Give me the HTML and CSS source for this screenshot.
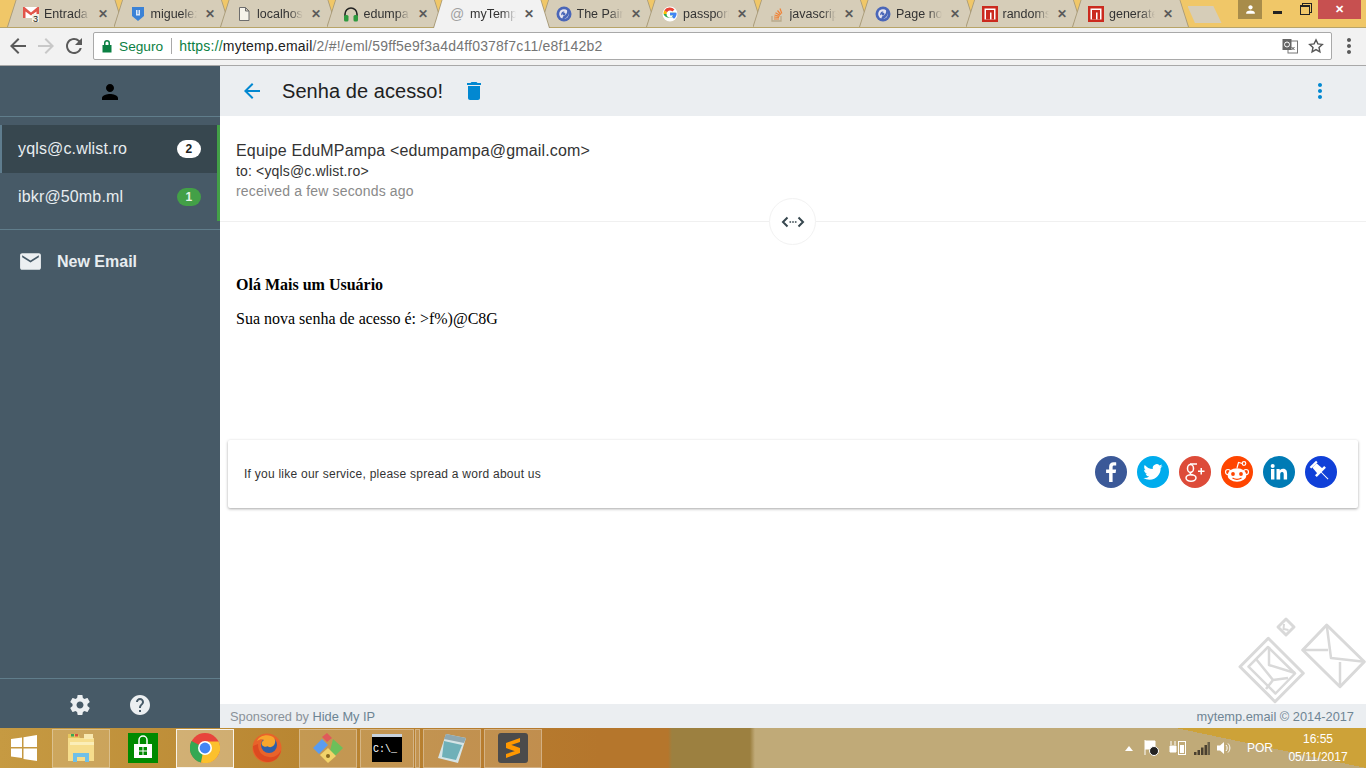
FILE: index.html
```html
<!DOCTYPE html>
<html>
  <head>
    <meta charset="utf-8">
    <title>myTemp.email</title>
    <link rel="stylesheet" href="styles.css">
  </head>
  <body>
    <svg class="sprites" xmlns="http://www.w3.org/2000/svg">
      <symbol id="i-person" viewBox="0 0 24 24"><path d="M12 12c2.21 0 4-1.79 4-4s-1.79-4-4-4-4 1.79-4 4 1.79 4 4 4zm0 2c-2.67 0-8 1.34-8 4v2h16v-2c0-2.66-5.33-4-8-4z"/></symbol>
      <symbol id="i-back" viewBox="0 0 24 24"><path d="M20 11H7.83l5.59-5.59L12 4l-8 8 8 8 1.41-1.41L7.83 13H20v-2z"/></symbol>
      <symbol id="i-trash" viewBox="0 0 24 24"><path d="M6 19c0 1.1.9 2 2 2h8c1.1 0 2-.9 2-2V7H6v12zM19 4h-3.5l-1-1h-5l-1 1H5v2h14V4z"/></symbol>
      <symbol id="i-dots" viewBox="0 0 24 24"><path d="M12 8c1.1 0 2-.9 2-2s-.9-2-2-2-2 .9-2 2 .9 2 2 2zm0 2c-1.1 0-2 .9-2 2s.9 2 2 2 2-.9 2-2-.9-2-2-2zm0 6c-1.1 0-2 .9-2 2s.9 2 2 2 2-.9 2-2-.9-2-2-2z"/></symbol>
      <symbol id="i-mail" viewBox="0 0 24 24"><path d="M20 4H4c-1.1 0-1.99.9-1.99 2L2 18c0 1.1.9 2 2 2h16c1.1 0 2-.9 2-2V6c0-1.1-.9-2-2-2zm0 4l-8 5-8-5V6l8 5 8-5v2z"/></symbol>
      <symbol id="i-gear" viewBox="0 0 24 24"><path d="M19.43 12.98c.04-.32.07-.64.07-.98s-.03-.66-.07-.98l2.11-1.65c.19-.15.24-.42.12-.64l-2-3.46c-.12-.22-.39-.3-.61-.22l-2.49 1c-.52-.4-1.08-.73-1.69-.98l-.38-2.65C14.46 2.18 14.25 2 14 2h-4c-.25 0-.46.18-.49.42l-.38 2.65c-.61.25-1.17.59-1.69.98l-2.49-1c-.23-.09-.49 0-.61.22l-2 3.46c-.13.22-.07.49.12.64l2.11 1.65c-.04.32-.07.65-.07.98s.03.66.07.98l-2.11 1.65c-.19.15-.24.42-.12.64l2 3.46c.12.22.39.3.61.22l2.49-1c.52.4 1.08.73 1.69.98l.38 2.65c.03.24.24.42.49.42h4c.25 0 .46-.18.49-.42l.38-2.65c.61-.25 1.17-.59 1.69-.98l2.49 1c.23.09.49 0 .61-.22l2-3.46c.12-.22.07-.49-.12-.64l-2.11-1.65zM12 15.5c-1.93 0-3.5-1.57-3.5-3.5s1.57-3.5 3.5-3.5 3.5 1.57 3.5 3.5-1.57 3.5-3.5 3.5z"/></symbol>
      <symbol id="i-help" viewBox="0 0 24 24"><path d="M12 2C6.48 2 2 6.48 2 12s4.48 10 10 10 10-4.48 10-10S17.52 2 12 2zm1 17h-2v-2h2v2zm2.07-7.75l-.9.92C13.45 12.9 13 13.5 13 15h-2v-.5c0-1.1.45-2.1 1.17-2.83l1.24-1.26c.37-.36.59-.86.59-1.41 0-1.1-.9-2-2-2s-2 .9-2 2H8c0-2.21 1.79-4 4-4s4 1.79 4 4c0 .88-.36 1.68-.93 2.25z"/></symbol>
      <symbol id="f-disc" viewBox="0 0 16 16"><circle cx="8" cy="8" r="7.500" fill="#4a66b8"/><circle cx="8" cy="8" r="4.800" fill="#e8e6f0"/><path d="M10.500 2.500C12 5 11 9 7 10.500L6 13.500C10 13 13 10 13 6.500 13 5 12 3.500 10.500 2.500zM7 5.500A2.800 2.800 0 0 0 5.500 9.500L8.500 5.500z" fill="#4a66b8"/><circle cx="8" cy="8" r="1.500" fill="#4a66b8"/></symbol>
      <symbol id="f-npm" viewBox="0 0 16 16"><rect width="16" height="16" fill="#cb2a1e"/><rect x="2.500" y="2.500" width="11" height="11" fill="#fff"/><path d="M4 13.500V4h8v9.500H9.500V6.500H8v7z" fill="#cb2a1e"/></symbol>
    </svg>

    <div class="chrome">
      <div class="tabstrip">
        <div class="tab">
          <svg class="favicon fav-gmail" viewBox="0 0 16 16"><path d="M0 1h16v11H0z" fill="#fff"/><path d="M0 1v11h2.500V5.500L8 9.500l5.500-4V12H16V1h-1.500L8 6.500 1.500 1z" fill="#e2554a"/><rect x="9" y="8" width="7" height="8" fill="#f4efe2"/><text x="10" y="15.500" class="fav-num">3</text></svg>
          <span class="tab-title">Entrada (</span><span class="tab-x">✕</span>
        </div>
        <div class="tab">
          <svg class="favicon" viewBox="0 0 16 16"><path d="M2 1h12v9l-6 5-6-5z" fill="#3b82d6"/><path d="M6 4h1.500v4h1V4H10v5.500H6z" fill="#dbe8fa"/></svg>
          <span class="tab-title">miguelez</span><span class="tab-x">✕</span>
        </div>
        <div class="tab">
          <svg class="favicon" viewBox="0 0 16 16"><path d="M3.500 1.500h6l3.500 3.500v9.500h-9.500z M9.500 1.500v3.500h3.500" fill="#f6f3ea" stroke="#6d6d6d"/></svg>
          <span class="tab-title">localhost</span><span class="tab-x">✕</span>
        </div>
        <div class="tab">
          <svg class="favicon" viewBox="0 0 16 16"><path d="M2 10V8a6 6 0 0 1 12 0v2" fill="none" stroke="#222" stroke-width="1.600"/><rect x="1" y="9" width="4.500" height="6.500" rx="1.500" fill="#2f9a3f"/><rect x="10.500" y="9" width="4.500" height="6.500" rx="1.500" fill="#2f9a3f"/></svg>
          <span class="tab-title">edumpa</span><span class="tab-x">✕</span>
        </div>
        <div class="tab is-active">
          <span class="favicon fav-at">@</span>
          <span class="tab-title">myTemp</span><span class="tab-x">✕</span>
        </div>
        <div class="tab">
          <svg class="favicon"><use href="#f-disc"/></svg>
          <span class="tab-title">The Pain</span><span class="tab-x">✕</span>
        </div>
        <div class="tab">
          <svg class="favicon" viewBox="0 0 16 16"><circle cx="8" cy="8" r="7.500" fill="#fff"/><path d="M13.700 6.800H8v2.500h3.200A3.400 3.400 0 0 1 4.600 8H1.500a6.500 6.500 0 0 0 12.200-1.200z" fill="#34a853"/><path d="M4.600 8a3.400 3.400 0 0 1 .5-1.800L2.400 4.300A6.500 6.500 0 0 0 1.500 8z" fill="#fbbc05"/><path d="M2.400 4.300L5.100 6.200A3.400 3.400 0 0 1 10.400 5.600l2.100-2.100A6.500 6.500 0 0 0 2.400 4.300z" fill="#ea4335"/><path d="M14.500 6.800H8v2.500h3.300a3.400 3.400 0 0 1-1.300 1.800l2 1.700a6.500 6.500 0 0 0 2.500-6z" fill="#4285f4"/></svg>
          <span class="tab-title">passport</span><span class="tab-x">✕</span>
        </div>
        <div class="tab">
          <svg class="favicon" viewBox="0 0 16 16"><path d="M3 10v5h9v-5" fill="none" stroke="#b8a98c" stroke-width="1.300"/><path d="M5 13h5M5 11l5 .5M5.500 9l5 1.300M6.500 6.800l4.500 2.500M8.500 4.500l3.300 4M11 2.500l1.800 5" fill="none" stroke="#ef8236" stroke-width="1.200"/></svg>
          <span class="tab-title">javascript</span><span class="tab-x">✕</span>
        </div>
        <div class="tab">
          <svg class="favicon"><use href="#f-disc"/></svg>
          <span class="tab-title">Page not</span><span class="tab-x">✕</span>
        </div>
        <div class="tab">
          <svg class="favicon"><use href="#f-npm"/></svg>
          <span class="tab-title">randoms</span><span class="tab-x">✕</span>
        </div>
        <div class="tab">
          <svg class="favicon"><use href="#f-npm"/></svg>
          <span class="tab-title">generate</span><span class="tab-x">✕</span>
        </div>
        <div class="new-tab"></div>
        <div class="win-controls">
          <div class="win-user"><svg class="ico-13"><use href="#i-person"/></svg></div>
          <div class="win-btn"><span class="win-min"></span></div>
          <div class="win-btn"><span class="win-max"></span></div>
          <div class="win-close">✕</div>
        </div>
      </div>
      <div class="toolbar">
        <svg class="nav-ico" viewBox="0 0 24 24"><use href="#i-back"/></svg>
        <svg class="nav-ico is-off" viewBox="0 0 24 24"><path d="M4 11h12.170l-5.590-5.590L12 4l8 8-8 8-1.410-1.410L16.170 13H4v-2z"/></svg>
        <svg class="nav-ico" viewBox="0 0 24 24"><path d="M17.650 6.350A7.958 7.958 0 0 0 12 4c-4.420 0-7.990 3.580-7.990 8s3.570 8 7.990 8c3.730 0 6.840-2.550 7.730-6h-2.080A5.990 5.990 0 0 1 12 18c-3.310 0-6-2.690-6-6s2.690-6 6-6c1.660 0 3.140.69 4.220 1.780L13 11h7V4l-2.350 2.350z"/></svg>
        <div class="omnibox">
          <svg class="lock" viewBox="0 0 12 14"><path d="M3 6V4a3 3 0 0 1 6 0v2h1.500v7.500h-9V6zm1.500 0h3V4a1.500 1.500 0 0 0-3 0z"/></svg>
          <span class="secure">Seguro</span>
          <span class="omni-sep"></span>
          <span class="url"><span class="url-https">https://</span><span class="url-host">mytemp.email</span>/2/#!/eml/59ff5e9f3a4d4ff0378f7c11/e8f142b2</span>
          <svg class="translate" viewBox="0 0 16 16"><rect x="6" y="3" width="9.500" height="12" fill="#fff" stroke="#777"/><rect x="0.500" y="1" width="9" height="11" fill="#666"/><circle cx="5" cy="6.500" r="2.500" fill="none" stroke="#fff"/><path d="M9.500 9l3 3M12.500 9l-3 3" stroke="#555"/></svg>
          <svg class="star" viewBox="0 0 16 16"><path d="M8 1.800l1.900 4.100 4.400.5-3.300 3 .9 4.400L8 11.600l-3.900 2.200.9-4.400-3.300-3 4.400-.5z" fill="none" stroke="#555" stroke-width="1.400"/></svg>
        </div>
        <svg class="menu-ico" viewBox="0 0 24 24"><use href="#i-dots"/></svg>
      </div>
    </div>

    <div class="app">
      <aside class="sidebar">
        <div class="side-top"><svg class="ico-24"><use href="#i-person"/></svg></div>
        <div class="side-accounts">
          <ul class="accounts">
            <li class="account is-current"><span>yqls@c.wlist.ro</span><b class="badge">2</b></li>
            <li class="account"><span>ibkr@50mb.ml</span><b class="badge is-green">1</b></li>
          </ul>
        </div>
        <div class="new-email"><svg class="ico-mail"><use href="#i-mail"/></svg><span>New Email</span></div>
        <div class="side-bottom">
          <svg class="ico-24"><use href="#i-gear"/></svg>
          <svg class="ico-24"><use href="#i-help"/></svg>
        </div>
      </aside>

      <main class="content">
        <header class="mail-bar">
          <svg class="ico-24 blue"><use href="#i-back"/></svg>
          <h1>Senha de acesso!</h1>
          <svg class="ico-24 blue"><use href="#i-trash"/></svg>
          <svg class="ico-24 blue bar-more"><use href="#i-dots"/></svg>
        </header>

        <div class="mail-scroll">
          <div class="mail-head">
            <div class="from">Equipe EduMPampa &lt;edumpampa@gmail.com&gt;</div>
            <div class="to">to: &lt;yqls@c.wlist.ro&gt;</div>
            <div class="when">received a few seconds ago</div>
            <div class="source-btn">
              <svg viewBox="0 0 24 16" width="24" height="16"><path d="M6.500 3.500L2 8l4.500 4.500M17.500 3.500L22 8l-4.500 4.500" fill="none" stroke="#37474f" stroke-width="2"/><path d="M8.500 7.200h1.600v1.600H8.500zM11.200 7.200h1.600v1.600h-1.600zM13.900 7.200h1.600v1.600h-1.600z" fill="#37474f"/></svg>
            </div>
          </div>
          <div class="mail-body">
            <p><strong>Olá Mais um Usuário</strong></p>
            <p>Sua nova senha de acesso é: &gt;f%)@C8G</p>
          </div>
          <div class="share-card">
            <span>If you like our service, please spread a word about us</span>
            <div class="share-icons">
              <svg class="soc" viewBox="0 0 32 32"><circle cx="16" cy="16" r="16" fill="#3b5998"/><path d="M17.600 26V17h3l.5-3.500h-3.500v-2.200c0-1 .3-1.700 1.800-1.700h1.800V6.400c-.3 0-1.400-.1-2.600-.1-2.700 0-4.500 1.600-4.500 4.600v2.600h-3V17h3v9z" fill="#fff"/></svg>
              <svg class="soc" viewBox="0 0 32 32"><circle cx="16" cy="16" r="16" fill="#00aced"/><g transform="translate(6.400 6.400) scale(.8)"><path fill="#fff" d="M23.953 4.570a10 10 0 01-2.825.775 4.958 4.958 0 002.163-2.723c-.951.555-2.005.959-3.127 1.184a4.920 4.920 0 00-8.384 4.482C7.690 8.095 4.067 6.130 1.640 3.162a4.822 4.822 0 00-.666 2.475c0 1.710.870 3.213 2.188 4.096a4.904 4.904 0 01-2.228-.616v.060a4.923 4.923 0 003.946 4.827 4.996 4.996 0 01-2.212.085 4.936 4.936 0 004.604 3.417 9.867 9.867 0 01-6.102 2.105c-.390 0-.779-.023-1.170-.067a13.995 13.995 0 007.557 2.209c9.053 0 13.998-7.496 13.998-13.985 0-.210 0-.420-.015-.630A9.935 9.935 0 0024 4.590z"/></g></svg>
              <svg class="soc" viewBox="0 0 32 32"><circle cx="16" cy="16" r="16" fill="#dd4b39"/><g fill="none" stroke="#fff" stroke-width="1.500"><ellipse cx="11.500" cy="12.500" rx="3" ry="4"/><ellipse cx="12" cy="22" rx="5" ry="3.200"/><path d="M13 16c-2.500.5-2.500 2 .5 3"/><path d="M11 8h7"/></g><path d="M21.500 12h1.500v2.500h2.500V16H23v2.500h-1.500V16H19v-1.500h2.500z" fill="#fff"/></svg>
              <svg class="soc" viewBox="0 0 32 32"><circle cx="16" cy="16" r="16" fill="#ff4500"/><circle cx="7" cy="16" r="2.500" fill="#ff4500" stroke="#fff" stroke-width="1.200"/><circle cx="25" cy="16" r="2.500" fill="#ff4500" stroke="#fff" stroke-width="1.200"/><ellipse cx="16" cy="19" rx="9.500" ry="6.800" fill="#fff"/><circle cx="23" cy="7.500" r="1.800" fill="#ff4500" stroke="#fff" stroke-width="1.200"/><path d="M16 12l1.500-5.500 4 1" fill="none" stroke="#fff" stroke-width="1.200"/><circle cx="12" cy="18" r="1.900" fill="#ff4500"/><circle cx="20" cy="18" r="1.900" fill="#ff4500"/><path d="M11.500 22c2.500 1.500 6.500 1.500 9 0" fill="none" stroke="#ff4500" stroke-width="1.200"/></svg>
              <svg class="soc" viewBox="0 0 32 32"><circle cx="16" cy="16" r="16" fill="#007bb5"/><path d="M8 13h3.400v10.500H8zM9.700 8a2 2 0 1 1 0 4 2 2 0 0 1 0-4zM13.500 13h3.200v1.500c.5-.9 1.600-1.800 3.300-1.800 3.500 0 4.100 2.300 4.100 5.300v5.500h-3.400v-4.900c0-1.200 0-2.700-1.600-2.700s-1.900 1.300-1.900 2.600v5h-3.700z" fill="#fff"/></svg>
              <svg class="soc" viewBox="0 0 32 32"><circle cx="16" cy="16" r="16" fill="#1040d8"/><g transform="rotate(-45 16 16) translate(0 -1)" fill="#fff"><path d="M11.500 5.500h9v2.200h-9z"/><path d="M13 7.700h6l.6 7.800H12.400z"/><path d="M9.500 15h13v2.500h-13z"/><path d="M15.500 17h1v10h-1z"/></g></svg>
            </div>
          </div>
        </div>

        <footer class="mail-foot">
          <span>Sponsored by <a class="foot-link">Hide My IP</a></span>
          <span class="foot-copy">mytemp.email © 2014-2017</span>
        </footer>

        <svg class="watermark" viewBox="0 0 130 89" width="130" height="89">
          <g fill="none" stroke="#d9d9d9" stroke-width="2.500" stroke-linejoin="round">
            <path d="M50 4l8 8-8 8-8-8z" stroke-width="3"/>
            <path d="M48 9l-.5 5 5 1" stroke-width="2"/>
            <path d="M32.300 23.300L4 51.700 39 86.700 67.300 58.300z" stroke-width="3"/>
            <path d="M32 32L12.500 51.700 39.500 78.500 59 58.500z"/>
            <path d="M33 32v18l26 8M20 44l17 21 15-2M30 74l7-9"/>
            <path d="M90.700 10L66.700 35 104 71.700 128.300 46.700z" stroke-width="3"/>
            <path d="M90.700 10L95 43 128.300 46.700M66.700 35H92M104 71.700V47"/>
          </g>
        </svg>
      </main>
    </div>

    <div class="taskbar">
      <svg class="start" viewBox="0 0 26 26"><path d="M0 4l11-1.500V12H0zM12.500 2.300L26 0v12H12.500zM0 13.500h11V23L0 21.500zM12.500 13.500H26V26l-13.500-2z" fill="#fff"/></svg>
      <div class="task is-open gap-8">
        <svg viewBox="0 0 30 30" width="30" height="30"><path d="M2 5h26v23H2z" fill="#f6dd8c"/><path d="M2 1h10l2 4H2z" fill="#e8c860"/><path d="M5 1h3v2.500H5z" fill="#3aa655"/><path d="M9 1h3v2.500H9z" fill="#d8503c"/><path d="M18 1h9v5h-9z" fill="#f8e8b0"/><path d="M4 9h24v3H4z" fill="#fbeeb8"/><path d="M7 29v-9h16v9h-4v-5h-8v5z" fill="#6fc0e8"/></svg>
      </div>
      <div class="task is-narrow gap-8">
        <svg viewBox="0 0 30 30" width="30" height="30"><path d="M0 0h30v30H0z" fill="#008a00"/><path d="M6 11h18v14H6z" fill="#fff"/><path d="M11 11V7a4 4 0 0 1 8 0v4" fill="none" stroke="#fff" stroke-width="1.500"/><path d="M11 14h3.500v3.500H11zM15.500 14H19v3.500h-3.500zM11 18.500h3.500V22H11zM15.500 18.500H19V22h-3.500z" fill="#008a00"/></svg>
      </div>
      <div class="task is-open is-current gap-8">
        <svg viewBox="0 0 30 30" width="30" height="30"><circle cx="15" cy="15" r="15" fill="#e8453c"/><path d="M15 15L1.500 8A15 15 0 0 0 11 29.500z" fill="#34a853"/><path d="M15 8.500h13.500A15 15 0 0 1 11 29.500z" fill="#fbc02d"/><circle cx="15" cy="15" r="7" fill="#fff"/><circle cx="15" cy="15" r="5.400" fill="#4285f4"/></svg>
      </div>
      <div class="task is-narrow gap-7">
        <svg viewBox="0 0 30 30" width="30" height="30"><circle cx="15" cy="15" r="14.500" fill="#e8632a"/><circle cx="17" cy="12" r="8" fill="#2f5fa8"/><path d="M19 3c-5-2-12 0-14 5 3-2 5-2 7-1-2 1-3 3-2 5 2 3 7 2 8-1l-3 1c2 4 7 2 8-2 1-3-1-6-4-7z" fill="#f8a52c"/><path d="M1 13c0 9 7 16 15 16 7 0 12-5 13-12-2 5-7 8-12 7C10 23 6 19 6 11z" fill="#dd4a20"/></svg>
      </div>
      <div class="task is-open gap-3">
        <svg viewBox="0 0 32 32" width="32" height="32"><path d="M10 5l5-4 5 5-5 4z" fill="#e05a5a"/><path d="M1 16l9-9 6 6-9 9z" fill="#5a9cf0"/><path d="M21 7l10 9-8 8-5-5z" fill="#6cc05a"/><path d="M8 23l8-7 8 8-8 7z" fill="#f2d36a"/><circle cx="16" cy="24" r="2" fill="#8a6a20"/></svg>
      </div>
      <div class="task is-open is-cmd gap-1">
        <svg viewBox="0 0 30 28" width="30" height="28"><path d="M0 0h30v28H0z" fill="#000"/><path d="M0 0h30v3H0z" fill="#c8d2dc"/></svg>
        <span class="cmd-text">C:\_</span>
      </div>
      <div class="task-sliver"></div>
      <div class="task is-open gap-3">
        <svg viewBox="0 0 30 32" width="30" height="32"><path d="M9 2l20 4-8 25L1 26z" fill="#d5e4e6"/><path d="M9 2l20 4-2 5L7 7z" fill="#8fa8b0"/><path d="M7 9l18 4-6 15-14-3z" fill="#6fb0b8"/></svg>
      </div>
      <div class="task is-open">
        <svg viewBox="0 0 30 30" width="30" height="30"><rect width="30" height="30" rx="3" fill="#4b4b4b"/><path d="M22 5L8 10v5l14 5v-5l-9-3 9-3zM8 25l14-5v-5L8 10v5l9 3-9 3z" fill="#ff9800"/></svg>
      </div>
      <div class="tray">
        <span class="tray-caret"></span>
        <svg class="tray-flag" viewBox="0 0 16 18" width="16" height="18"><path d="M2 1v15M2 2h10v8H2" fill="#fff" stroke="#fff"/><circle cx="11" cy="12" r="4.500" fill="#222" stroke="#fff"/></svg>
        <svg class="tray-batt" viewBox="0 0 18 18" width="18" height="18"><path d="M1 7h6v6H1zM2 2v4M6 2v4" fill="#fff" stroke="#fff"/><rect x="9.500" y="2.500" width="7" height="13" fill="none" stroke="#fff"/><rect x="11" y="6" width="4" height="8" fill="#fff"/></svg>
        <svg viewBox="0 0 16 14" width="16" height="14"><path d="M0 11h2.500v3H0zM3.500 9H6v5H3.500zM7 6.500h2.500V14H7zM10.500 4H13v10h-2.500z" fill="#4a4030"/><path d="M13.500 1H16v13h-2.500z" fill="#6a6048"/></svg>
        <svg viewBox="0 0 16 16" width="16" height="16"><path d="M1 5.500h3L8 2v12L4 10.500H1z" fill="#fff"/><path d="M10 5c1.500 1.500 1.500 4.500 0 6M12 3.500c2.500 2.500 2.500 6.500 0 9" fill="none" stroke="#fff"/></svg>
        <span class="tray-lang">POR</span>
        <div class="tray-clock"><div>16:55</div><div>05/11/2017</div></div>
      </div>
    </div>
  </body>
</html>
```

FILE: styles.css
```css
* {
  box-sizing: border-box;
}

html, body {
  height: 100%;
}

body {
  margin: 0;
  display: flex;
  flex-direction: column;
  height: 768px;
  overflow: hidden;
  font-family: "Liberation Sans", Arial, sans-serif;
  color: #212121;
  background: #fff;
}

.sprites {
  display: none;
}

/* browser frame */
.chrome {
  flex: none;
  height: 66px;
  background: #f2f2f2;
}

.tabstrip {
  display: flex;
  align-items: flex-end;
  height: 28px;
  padding: 0 5px 0 7px;
  background: #f0c768;
  border-bottom: 1px solid #b8a468;
}

.tab {
  position: relative;
  flex: none;
  display: flex;
  align-items: center;
  width: 117px;
  height: 28px;
  margin-right: -10.5px;
  padding: 1px 0 0 16px;
  background: #a89a78;
  clip-path: polygon(0 100%, 9px 0, calc(100% - 9px) 0, 100% 100%);
  font-size: 12.5px;
  color: #333;
}

.tab::before {
  content: "";
  position: absolute;
  left: 0;
  right: 0;
  top: 1px;
  bottom: 0;
  background: #d6cdb8;
  clip-path: polygon(1px 100%, 9.5px 0, calc(100% - 9.5px) 0, calc(100% - 1px) 100%);
}

.tab.is-active {
  z-index: 2;
  height: 29px;
  margin-bottom: -1px;
}

.tab.is-active::before {
  background: #f2f2f2;
}

.favicon {
  position: relative;
  flex: none;
  width: 16px;
  height: 16px;
}

.fav-num {
  font-family: "Liberation Sans", sans-serif;
  font-size: 9px;
  fill: #222;
}

.fav-at {
  color: #a0a0a0;
  font-size: 14px;
  line-height: 16px;
  text-align: center;
}

.tab-title {
  position: relative;
  flex: none;
  width: 46px;
  margin-left: 5px;
  overflow: hidden;
  white-space: nowrap;
  -webkit-mask-image: linear-gradient(to right, #000 70%, transparent);
  mask-image: linear-gradient(to right, #000 70%, transparent);
}

.tab-x {
  position: relative;
  margin-left: 8px;
  font-size: 12px;
  font-weight: bold;
  color: #5a5a5a;
}

.new-tab {
  flex: none;
  width: 34px;
  height: 17px;
  margin: 0 0 4px 9px;
  background: #d6cdb8;
  clip-path: polygon(0 0, 76% 0, 100% 100%, 22% 100%);
}

.win-controls {
  display: flex;
  align-self: flex-start;
  margin-left: auto;
}

.win-user {
  display: flex;
  align-items: center;
  justify-content: center;
  width: 24px;
  height: 19px;
  margin-right: 2px;
  background: #a88c4a;
}

.ico-13 {
  width: 13px;
  height: 13px;
  fill: #fff;
}

.win-btn {
  display: flex;
  align-items: center;
  justify-content: center;
  width: 27px;
  height: 19px;
}

.win-min {
  width: 9px;
  height: 3px;
  margin-top: 5px;
  background: #222;
}

.win-max {
  width: 10px;
  height: 10px;
  border: 1px solid #222;
  border-top-width: 2px;
  box-shadow: 2px -2px 0 -1px #f0c768, 2px -2px 0 0 #222;
}

.win-close {
  width: 43px;
  height: 19px;
  background: #c75050;
  color: #fff;
  font-size: 11px;
  font-weight: bold;
  line-height: 19px;
  text-align: center;
}

.toolbar {
  display: flex;
  align-items: center;
  height: 38px;
  padding: 0 0 1px 6px;
  border-bottom: 1px solid #a8a8a8;
}

.nav-ico {
  flex: none;
  width: 24px;
  height: 24px;
  margin-right: 4px;
  fill: #5a5a5a;
}

.nav-ico.is-off {
  fill: #c8c8c8;
}

.omnibox {
  flex: 1;
  display: flex;
  align-items: center;
  height: 28px;
  margin-left: 3px;
  padding: 0 7px 0 7px;
  background: #fff;
  border: 1px solid #a9a9a9;
  border-radius: 2px;
  font-size: 14px;
}

.lock {
  flex: none;
  width: 12px;
  height: 14px;
  fill: #0b8043;
}

.secure {
  margin-left: 6px;
  font-size: 13.7px;
  color: #0b8043;
}

.omni-sep {
  width: 1px;
  height: 16px;
  margin: 0 7px 0 8px;
  background: #a9a9a9;
}

.url {
  flex: 1;
  letter-spacing: .21px;
  color: #757575;
  white-space: nowrap;
}

.url-https {
  color: #0b8043;
}

.url-host {
  color: #212121;
}

.translate {
  flex: none;
  width: 16px;
  height: 16px;
  margin-right: 10px;
}

.star {
  flex: none;
  width: 16px;
  height: 16px;
}

.menu-ico {
  flex: none;
  width: 24px;
  height: 24px;
  margin: 0 5px;
  fill: #5a5a5a;
}

/* mail app */
.app {
  flex: 1;
  display: flex;
  min-height: 0;
}

.sidebar {
  flex: none;
  display: flex;
  flex-direction: column;
  width: 220px;
  background: #475a67;
  color: #e8edf0;
}

.side-top {
  display: flex;
  align-items: center;
  justify-content: center;
  height: 51px;
  padding-top: 2px;
  border-bottom: 1px solid #607d8b;
}

.ico-24 {
  flex: none;
  width: 24px;
  height: 24px;
}

.side-accounts {
  padding: 8px 0;
  border-bottom: 1px solid #607d8b;
}

.accounts {
  margin: 0;
  padding: 0;
  list-style: none;
  border-right: 3px solid #43a047;
}

.account {
  display: flex;
  align-items: center;
  justify-content: space-between;
  height: 48px;
  padding: 0 16px 0 18px;
  font-size: 16px;
  letter-spacing: .15px;
}

.account.is-current {
  padding-left: 16px;
  background: #37474f;
  border-left: 2px solid #5f7d8e;
}

.badge {
  width: 24px;
  height: 18px;
  border-radius: 9px;
  background: #fff;
  color: #222;
  font-size: 12px;
  line-height: 18px;
  text-align: center;
}

.badge.is-green {
  background: #43a047;
  color: #e8f5e9;
}

.new-email {
  display: flex;
  align-items: center;
  height: 62px;
  padding: 1px 0 0 18px;
  font-size: 16px;
  font-weight: bold;
}

.ico-mail {
  flex: none;
  width: 25px;
  height: 25px;
  margin-right: 14px;
  fill: #eceff1;
}

.side-bottom {
  display: flex;
  align-items: center;
  justify-content: center;
  gap: 36px;
  height: 50px;
  margin-top: auto;
  padding-top: 3px;
  border-top: 1px solid #607d8b;
  fill: #eceff1;
}

.content {
  position: relative;
  flex: 1;
  display: flex;
  flex-direction: column;
  min-width: 0;
}

.mail-bar {
  flex: none;
  display: flex;
  align-items: center;
  height: 50px;
  padding: 0 34px 0 20px;
  background: #ebeef1;
}

.mail-bar h1 {
  margin: 0 19px 0 18px;
  font-size: 20px;
  font-weight: normal;
  letter-spacing: .06px;
  color: #212121;
}

.blue {
  fill: #0288d1;
}

.bar-more {
  margin-left: auto;
}

.mail-scroll {
  flex: 1;
  min-height: 0;
}

.mail-head {
  position: relative;
  height: 106px;
  padding: 25px 16px 0;
  border-bottom: 1px solid #f0f0f0;
  letter-spacing: .16px;
}

.from {
  font-size: 16px;
  line-height: 20px;
  color: #333;
}

.to {
  font-size: 14px;
  line-height: 20px;
  color: #333;
}

.when {
  font-size: 14px;
  line-height: 20px;
  color: #8a8a8a;
}

.source-btn {
  position: absolute;
  left: 50%;
  bottom: -24px;
  display: flex;
  align-items: center;
  justify-content: center;
  width: 47px;
  height: 47px;
  margin-left: -24px;
  background: #fff;
  border: 1px solid #f2f2f2;
  border-radius: 50%;
}

.mail-body {
  padding: 54px 16px 0;
  font-family: "Liberation Serif", "Times New Roman", serif;
  font-size: 16px;
  color: #000;
}

.mail-body p {
  margin: 0 0 16px;
}

.share-card {
  display: flex;
  align-items: center;
  justify-content: space-between;
  height: 68px;
  margin: 112px 8px 0;
  padding: 0 21px 0 16px;
  background: #fff;
  border-radius: 2px;
  box-shadow: 0 1px 3px rgba(0, 0, 0, .35);
  font-size: 12px;
  letter-spacing: .25px;
  color: #333;
}

.share-icons {
  display: flex;
  gap: 10px;
  margin-top: -4px;
}

.soc {
  width: 32px;
  height: 32px;
}

.mail-foot {
  flex: none;
  display: flex;
  align-items: center;
  justify-content: space-between;
  height: 24px;
  padding: 0 12px 0 10px;
  background: #ebeef1;
  font-size: 12.8px;
  color: #8a9299;
}

.foot-link {
  color: #6b8493;
}

.foot-copy {
  color: #6f8594;
}

.watermark {
  position: absolute;
  right: 0;
  bottom: 24px;
}

/* taskbar */
.taskbar {
  flex: none;
  display: flex;
  align-items: center;
  height: 40px;
  padding-left: 11px;
  background:
    linear-gradient(to top right, transparent 50%, #cda238 50%) right top / 190px 40px no-repeat,
    linear-gradient(to right, #c69a42 0, #b98632 300px, #b5762c 600px, #b5762c 668px, #9c8040 672px, #9c8040 750px, #c0aa78 755px, #c0aa78 100%);
  color: #fff;
}

.start {
  flex: none;
  width: 26px;
  height: 26px;
  margin-right: 15px;
}

.task {
  flex: none;
  position: relative;
  display: flex;
  align-items: center;
  justify-content: center;
  width: 58px;
  height: 39px;
  border: 1px solid transparent;
}

.task.is-narrow {
  width: 50px;
}

.gap-8 {
  margin-right: 8px;
}

.gap-7 {
  margin-right: 7px;
}

.gap-3 {
  margin-right: 3px;
}

.gap-1 {
  margin-right: 1px;
}

.task.is-open {
  background: rgba(255, 255, 255, .16);
  border-color: rgba(255, 255, 255, .3);
}

.task.is-current {
  background: rgba(255, 255, 255, .3);
  border-color: rgba(255, 255, 255, .85);
}

.task.is-cmd {
  width: 54px;
}

.cmd-text {
  position: absolute;
  left: 12px;
  top: 14px;
  font-family: "Liberation Mono", monospace;
  font-size: 10px;
  color: #fff;
}

.task-sliver {
  flex: none;
  width: 5px;
  height: 39px;
  margin-right: 3px;
  background: rgba(255, 255, 255, .16);
  border: 1px solid rgba(255, 255, 255, .3);
}

.tray {
  display: flex;
  align-items: center;
  gap: 6px;
  margin-left: auto;
  padding-right: 17px;
  font-size: 12px;
}

.tray-caret {
  width: 0;
  height: 0;
  margin-right: 4px;
  border: 4px solid transparent;
  border-top-width: 0;
  border-bottom: 5px solid #fff;
}

.tray-flag {
  margin-right: 4px;
}

.tray-batt {
  margin-right: 1px;
}

.tray-lang {
  margin: 0 8px 0 9px;
}

.tray-clock {
  width: 62px;
  line-height: 18px;
  text-align: center;
}
```
